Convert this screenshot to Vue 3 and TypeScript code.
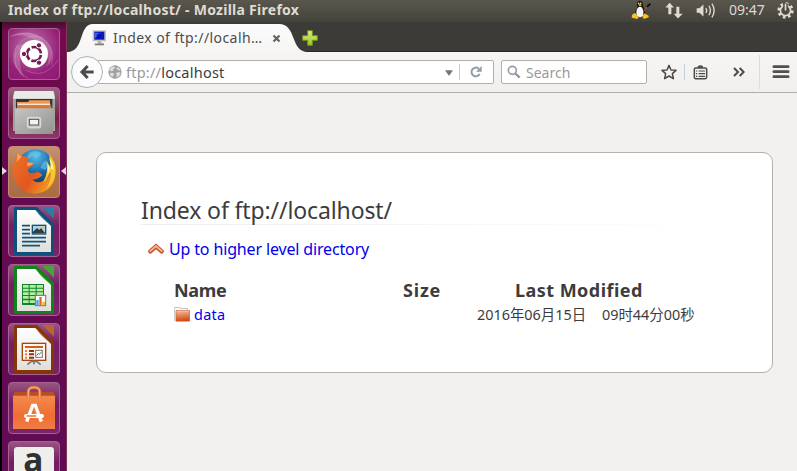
<script setup lang="ts">
interface Entry {
  name: string
  size: string
  date: string
  time: string
}

const host = 'localhost'
const entries: Entry[] = [
  { name: 'data', size: '', date: '2016年06月15日', time: '09时44分00秒' },
]
const apps = ['dash', 'files', 'firefox', 'writer', 'calc', 'impress', 'software', 'amazon']
const gridRows = [63, 74, 85, 96, 109]
</script>

<template>
  <div class="desktop">
    <header class="titlebar">
      <h1 class="window-title">Index of ftp://{{ host }}/ - Mozilla Firefox</h1>
      <div class="indicators">
        <svg class="tux" viewBox="0 0 60 60">
          <path d="M19 24Q15 2 26 2Q37 2 36 18Q46 34 42 50L14 51Q7 38 19 24Z" fill="#161616" />
          <path d="M20 24Q27 17 34 24Q40 36 36 48Q27 55 18 48Q13 34 20 24Z" fill="#f4f4f2" />
          <circle cx="23" cy="10" r="2.5" fill="#ddd" /><circle cx="29" cy="10" r="2.5" fill="#ddd" />
          <path d="M21 14L27 12L33 15L27 19Z" fill="#f2b90c" />
          <path d="M3 45L12 38L23 52L19 57L2 53Z M34 50L40 40L53 47L53 52L39 57Z" fill="#f8c419" />
          <path d="M38 33L50 18" stroke="#9b4c25" stroke-width="4" />
          <path d="M48 20L58 11" stroke="#111" stroke-width="6" />
        </svg>
        <svg class="network" viewBox="0 0 54 50">
          <path d="M14 2L27 16H19V36H10V16H1ZM39 49L26 35H34V14H43V35H53Z" fill="#dfdbd2" />
        </svg>
        <svg class="volume" viewBox="0 0 62 50">
          <path d="M2 18H10L22 7V43L10 32H2Z" fill="#dfdbd2" />
          <path d="M29 18Q34 25 29 32M38 11Q47 25 38 39M47 5Q60 25 47 45" fill="none" stroke="#dfdbd2" stroke-width="4" />
        </svg>
        <span class="clock">09:47</span>
        <svg class="session" viewBox="0 0 50 50">
          <circle cx="25" cy="25" r="20" fill="none" stroke="#dfdbd2" stroke-width="8" stroke-dasharray="7.85 7.85" />
          <circle cx="25" cy="25" r="15" fill="none" stroke="#dfdbd2" stroke-width="5" />
          <path d="M25 4V24" stroke="#45443e" stroke-width="13" />
          <path d="M25 5V25" stroke="#dfdbd2" stroke-width="5" />
        </svg>
      </div>
    </header>

    <div class="workspace">
      <nav class="launcher">
        <div v-for="app in apps" :key="app" class="tile" :class="app">
          <svg v-if="app === 'dash'" viewBox="0 0 156 156">
            <g fill="none" stroke="#e4b6d8" stroke-opacity=".45" stroke-width="2">
              <path d="M8 25Q60 0 112 38Q143 65 130 112" /><path d="M25 120Q3 80 35 43Q68 15 107 31" />
              <path d="M60 151Q10 123 24 74M55 127Q110 156 151 94" />
            </g>
            <path d="M5 25Q70 -5 117 42Q150 80 115 119Q138 65 84 38Q45 15 5 25M25 54Q2 110 50 151Q21 94 50 45Z" fill="#fff" opacity=".2" />
            <circle cx="78" cy="78" r="42" fill="#fff" />
            <circle cx="78" cy="78" r="21" fill="none" stroke="#781c54" stroke-width="8" stroke-dasharray="38 6" stroke-dashoffset="-3" />
            <g fill="#781c54" stroke="#fff" stroke-width="3"><circle cx="48" cy="78" r="8" /><circle cx="93" cy="52" r="8" /><circle cx="93" cy="104" r="8" /></g>
          </svg>
          <svg v-else-if="app === 'files'" viewBox="0 0 156 156">
            <defs>
              <linearGradient id="cab" x1="0" y1="0" x2="1" y2="1"><stop stop-color="#c5c5c3" /><stop offset="1" stop-color="#929290" /></linearGradient>
            </defs>
            <path d="M20 12H136L141 24V132H15V24Z" fill="#a2a2a0" />
            <path d="M20 12H136L141 35H15Z" fill="#e9e9e6" />
            <path d="M24 36H133V67H24Z" fill="#333" />
            <path d="M27 45H60L64 40H126V66H27Z" fill="#f09a50" />
            <path d="M30 50H127V53H30Z" fill="#fff" /><path d="M27 55H130V66H27Z" fill="#dc7633" />
            <path d="M21 64H135V141H21Z" fill="url(#cab)" />
            <rect x="58" y="91" width="40" height="32" rx="5" fill="#ccc" stroke="#eee" stroke-width="2" />
            <rect x="64" y="97" width="28" height="17" fill="#f3f3ed" stroke="#555" stroke-width="3" />
          </svg>
          <svg v-else-if="app === 'firefox'" viewBox="0 0 156 156">
            <defs>
              <radialGradient id="globe" cx=".5" cy=".2" r=".8"><stop stop-color="#55bce8" /><stop offset=".55" stop-color="#1769aa" /><stop offset="1" stop-color="#10265e" /></radialGradient>
              <linearGradient id="fox" x1="0" y1="0" x2="1" y2=".6"><stop stop-color="#ed7427" /><stop offset=".6" stop-color="#e25620" /><stop offset="1" stop-color="#f39a24" /></linearGradient>
            </defs>
            <circle cx="83" cy="66" r="56" fill="url(#globe)" />
            <path d="M63 22Q83 9 101 23L87 36L72 31L57 43ZM105 50Q119 35 121 58L112 73L97 65Z" fill="#79cbe9" opacity=".55" />
            <path d="M13 73Q13 54 25 40Q23 27 28 20Q34 28 42 31Q56 28 64 40Q57 44 58 50L77 51Q75 62 61 68Q57 76 67 81Q78 82 89 77Q99 81 103 88Q90 100 73 101Q88 115 110 103Q128 91 133 56Q147 78 139 103Q125 142 78 143Q21 138 13 73Z" fill="url(#fox)" />
            <path d="M28 20Q34 28 42 31L26 49ZM58 49L77 51Q72 60 57 61Z" fill="#f6a25d" />
            <path d="M121 22Q144 46 143 75Q143 108 115 128Q132 101 127 77Q119 100 105 109Q122 79 116 48Q124 56 127 65Q130 40 121 22Z" fill="#fbc527" />
            <path d="M123 34Q137 52 137 72L128 68L128 54ZM119 53L126 67L119 90Z" fill="#fff39d" />
          </svg>
          <svg v-else-if="app === 'writer' || app === 'calc' || app === 'impress'" viewBox="0 0 156 156">
            <defs>
              <linearGradient :id="`sheet-${app}`" x1="0" y1="0" x2="0" y2="1"><stop stop-color="#fff" /><stop offset="1" stop-color="#dededb" /></linearGradient>
            </defs>
            <path class="accent" d="M18 10Q18 6 22 6H87L138 57V145Q138 150 133 150H22Q18 150 18 145Z" />
            <path class="accent-light" d="M103 6H134Q138 6 138 10V41Z" />
            <path d="M27 15H82L129 63V141H27Z" :fill="`url(#sheet-${app})`" />
            <path class="accent-light" d="M85 17Q100 42 128 59L130 62L83 15Z" />
            <g v-if="app === 'writer'">
              <path d="M42 62H66M42 74H66M42 86H66M42 98H114M42 110H114M42 122H96" stroke="#115478" stroke-width="5" />
              <rect x="73" y="61" width="40" height="26" fill="#a7d6ed" stroke="#115478" stroke-width="4" />
              <path d="M75 85V80L87 69L94 75L99 69L111 84V85Z" fill="#3a3b38" /><circle cx="105" cy="67" r="4" fill="#f7c536" />
            </g>
            <g v-else-if="app === 'calc'">
              <rect x="42" y="60" width="66" height="63" fill="#12832c" />
              <path v-for="y in gridRows" :key="y" :d="`M45 ${y}H62V${y + 8}H45ZM65 ${y}H83V${y + 8}H65ZM86 ${y}H105V${y + 8}H86Z`" fill="#b3efa0" />
              <rect x="82" y="94" width="31" height="31" fill="#fff" stroke="#737373" stroke-width="3" />
              <path d="M85 108H92V123H85Z" fill="#42a4e8" /><path d="M94 99H101V123H94Z" fill="#e8612d" /><path d="M103 113H111V123H103Z" fill="#f0c022" />
            </g>
            <g v-else>
              <rect x="43" y="61" width="70" height="51" fill="#fff7ef" stroke="#a7440c" stroke-width="4" />
              <path d="M51 72H105" stroke="#d75c16" stroke-width="6" />
              <path d="M51 84H57M51 94H57M51 104H57" stroke="#e27c46" stroke-width="6" />
              <path d="M63 84H78M63 94H78M63 104H78" stroke="#8d3205" stroke-width="6" />
              <rect x="83" y="82" width="20" height="21" fill="#fff" stroke="#777" stroke-width="3" />
              <path d="M86 98L91 91L95 94L101 86" fill="none" stroke="#25a34a" stroke-width="3" />
              <path d="M70 115H86L98 125M70 115L58 125M78 113V124" fill="none" stroke="#777" stroke-width="5" />
            </g>
          </svg>
          <svg v-else-if="app === 'software'" viewBox="0 0 156 156">
            <defs><linearGradient id="bag" x1="0" y1="0" x2="0" y2="1"><stop stop-color="#f38a4d" /><stop offset=".6" stop-color="#ee6e32" /><stop offset="1" stop-color="#f17d45" /></linearGradient></defs>
            <path d="M20 30H136L141 43H15Z" fill="#b94f20" />
            <path d="M15 41H141V141H15Z" fill="url(#bag)" />
            <path d="M61 51V27Q63 16 78 16Q93 16 95 27V51" fill="none" stroke="#d66a38" stroke-width="9" />
            <path d="M61 51V27Q63 16 78 16Q93 16 95 27V51" fill="none" stroke="#f6a273" stroke-width="5" />
            <path d="M56 119L74 70H82L100 119" fill="none" stroke="#fff" stroke-width="10" />
            <path d="M54 102H102" stroke="#fff" stroke-width="12" stroke-linecap="round" /><path d="M56 102H85" stroke="#ed7135" stroke-width="5" />
          </svg>
          <svg v-else viewBox="0 0 156 156">
            <rect x="18" y="18" width="120" height="120" rx="10" fill="#eeeeec" />
            <text class="amazon-letter" x="46" y="92">a</text>
            <path d="M36 108Q78 135 121 108" stroke="#f39a20" stroke-width="8" fill="none" />
          </svg>
        </div>
        <svg class="running" viewBox="0 0 5 8"><path d="M0 0L5 4L0 8Z" fill="#ddd8df" /></svg>
        <svg class="focused" viewBox="0 0 5 8"><path d="M5 0L0 4L5 8Z" fill="#ddd8df" /></svg>
      </nav>

      <main class="browser">
        <div class="tabs">
          <svg class="tab-shape" viewBox="0 0 241 30" preserveAspectRatio="none">
            <defs><linearGradient id="tabfill" x1="0" y1="0" x2="0" y2="1"><stop stop-color="#fcfcfc" /><stop offset="1" stop-color="#f6f5f4" /></linearGradient></defs>
            <path d="M0 30C18 30 11 2 26 2H212C230 2 223 30 241 30Z" fill="url(#tabfill)" />
          </svg>
          <div class="tab">
            <svg class="computer" viewBox="0 0 45 48">
              <path d="M2 1H42V34H2Z" fill="#c4c2b7" /><path d="M7 5H37V29H7Z" fill="#0717c4" />
              <path d="M9 8H19V13H14V23H9ZM23 9H31V14H23Z" fill="#3869ed" /><path d="M12 23L28 8H34L17 27Z" fill="#001092" />
              <path d="M17 34H28V39H36V46H8V40H17Z" fill="#aaa89d" /><path d="M9 44H35" stroke="#77756b" stroke-width="3" />
            </svg>
            <span class="tab-label">Index of ftp://localh…</span>
            <svg class="close" viewBox="0 0 24 24"><path d="M4 4L20 20M20 4L4 20" stroke="#66655f" stroke-width="6" /></svg>
          </div>
          <svg class="new-tab" viewBox="0 0 48 48">
            <defs><linearGradient id="plus" x1="0" y1="0" x2="0" y2="1"><stop stop-color="#dceb8b" /><stop offset="1" stop-color="#9dc520" /></linearGradient></defs>
            <path d="M17 2H31V17H46V31H31V46H17V31H2V17H17Z" fill="url(#plus)" stroke="#6c9817" stroke-width="3" />
          </svg>
        </div>

        <div class="toolbar">
          <button class="back" aria-label="Back">
            <svg viewBox="0 0 48 48"><path d="M44 24H10M26 6L9 24L26 42" fill="none" stroke="#4b4b4b" stroke-width="9" /></svg>
          </button>
          <div class="address">
            <svg class="globe" viewBox="0 0 42 42">
              <circle cx="21" cy="21" r="20" fill="#a1a1a1" />
              <path d="M3 15L10 6L18 4L22 9L17 12L14 18L9 19ZM27 5L36 12L37 17L31 16L25 11ZM5 25L13 23L19 27L15 33L13 37L7 31ZM24 24L33 21L38 25L33 34L25 37L26 30Z" fill="#dedede" />
            </svg>
            <span class="url"><span class="scheme">ftp://</span>{{ host }}</span>
            <svg class="dropdown" viewBox="0 0 24 18"><path d="M2 2H22L12 16Z" fill="#777" stroke="#666" stroke-width="2" /></svg>
            <span class="divider"></span>
            <svg class="reload" viewBox="0 0 36 36">
              <path d="M29 24A13 13 0 1 1 26 8" fill="none" stroke="#929ba6" stroke-width="6" /><path d="M35 0V17H18Z" fill="#929ba6" />
            </svg>
          </div>
          <div class="search">
            <svg viewBox="0 0 42 42"><circle cx="16" cy="16" r="12" fill="none" stroke="#9b9b9b" stroke-width="5" /><path d="M25 25L38 38" stroke="#9b9b9b" stroke-width="7" /></svg>
            <span>Search</span>
          </div>
          <svg class="star" viewBox="0 0 48 48"><path d="M24 4L30 18L45 19L34 29L37 44L24 36L11 44L14 29L3 19L18 18Z" fill="none" stroke="#4b4b4b" stroke-width="4.5" stroke-linejoin="round" /></svg>
          <svg class="bookmarks" viewBox="0 0 45 45">
            <rect x="4" y="9" width="37" height="32" rx="4" fill="none" stroke="#4b4b4b" stroke-width="4.5" />
            <path d="M14 8V4Q22 -2 30 4V8Z" fill="#4b4b4b" />
            <path d="M9 18H13M17 18H36M9 26H13M17 26H36M9 34H13M17 34H36" stroke="#4b4b4b" stroke-width="3.5" />
          </svg>
          <svg class="more" viewBox="0 0 36 30"><path d="M3 3L15 15L3 27M20 3L32 15L20 27" fill="none" stroke="#4b4b4b" stroke-width="6" /></svg>
          <div class="menu"><svg viewBox="0 0 51 42"><path d="M4 5H47M4 20H47M4 35H47" stroke="#505050" stroke-width="8" stroke-linecap="round" /></svg></div>
        </div>

        <div class="page">
          <section class="listing">
            <h2 class="heading"><span>Index of ftp://{{ host }}/</span></h2>
            <a class="up">
              <svg viewBox="0 0 48 36"><path d="M7 25L24 10L41 25" fill="none" stroke="#cf492d" stroke-width="13" stroke-linecap="round" /><path d="M7 24L24 9L41 24" fill="none" stroke="#efb58b" stroke-width="6" stroke-linecap="round" /></svg>
              <span>Up to higher level directory</span>
            </a>
            <div class="table">
              <div class="columns"><span class="name">Name</span><span class="size">Size</span><span class="modified">Last Modified</span></div>
              <div v-for="entry in entries" :key="entry.name" class="entry">
                <a class="file">
                  <svg viewBox="0 0 48 44">
                    <defs><linearGradient id="folder" x1="0" y1="0" x2=".15" y2="1"><stop stop-color="#f1c39a" /><stop offset="1" stop-color="#d54816" /></linearGradient></defs>
                    <path d="M1 42V1H19L21 4H41V12" fill="#fafafa" stroke="#aaa" stroke-width="2" />
                    <path d="M6 10H47V42H6Z" fill="url(#folder)" stroke="#c9582e" stroke-width="2" /><path d="M8 12H45" stroke="#f8cba7" stroke-width="2" />
                  </svg><span>{{ entry.name }}</span>
                </a>
                <span class="date">{{ entry.date }}</span><span class="time">{{ entry.time }}</span>
              </div>
            </div>
          </section>
        </div>
      </main>
    </div>
  </div>
</template>

<style>
body { margin: 0; }
</style>

<style scoped>
* { box-sizing: border-box; }
svg { display: block; flex: none; }
.desktop { width: 797px; height: 471px; overflow: hidden; font-family: "Noto Sans", "Noto Sans CJK SC", sans-serif; color: #3c3c3c; white-space: nowrap; }
.titlebar { height: 22px; display: flex; justify-content: space-between; background: linear-gradient(#5a574d, #43423c); color: #dfdbd2; }
.window-title { margin: 0; padding-left: 8px; font-size: 14px; line-height: 20px; font-weight: 700; letter-spacing: .27px; }
.indicators { display: flex; align-items: flex-start; width: 166px; }
.tux { width: 20px; height: 20px; }
.network { width: 18px; height: 17px; margin: 2px 0 0 14px; }
.volume { width: 21px; height: 17px; margin: 2px 0 0 13px; }
.clock { margin-left: 12px; width: 37px; font-size: 14px; line-height: 20px; }
.session { width: 17px; height: 17px; margin: 2px 0 0 11px; }
.workspace { display: flex; height: 449px; }
.launcher { position: relative; width: 67px; height: 449px; padding: 6px 7px 0 6px; border-left: 2px solid #000; border-right: 1px solid #833457; background: linear-gradient(#480b2d, #720b4d 9px, #650a50 35%, #600c55); display: flex; flex-direction: column; gap: 7px; overflow: hidden; }
.tile { width: 52px; height: 52px; flex: none; border-radius: 4px; border: 1px solid #a66294; background: linear-gradient(#965581, #751c62 40%, #792668); overflow: hidden; }
.tile svg { width: 52px; height: 52px; margin: -1px; }
.dash { background: radial-gradient(circle at 45% 35%, #bc7bad, #962178 65%, #8c1974); }
.files { background: linear-gradient(#9c6282, #762044 60%, #8c3767); }
.firefox { background: linear-gradient(#c59372, #b27750 45%, #aa6c43); border-color: #c38c70; }
.writer .accent { fill: #0d517a; }
.writer .accent-light { fill: #2b7da9; }
.calc .accent { fill: #12821a; }
.calc .accent-light { fill: #43a934; }
.impress .accent { fill: #873407; }
.impress .accent-light { fill: #ba6533; }
.amazon-letter { font: 700 100px "Open Sans", sans-serif; fill: #303030; }
.running, .focused { position: absolute; width: 5px; height: 8px; top: 145px; }
.running { left: 0; }
.focused { right: 0; }
.browser { flex: 1; display: flex; flex-direction: column; }
.tabs { position: relative; height: 30px; background: #3c3b37; border-bottom: 1px solid #282724; display: flex; align-items: center; }
.tab-shape { position: absolute; left: 0; top: 0; width: 241px; height: 30px; }
.tab { position: relative; width: 235px; display: flex; align-items: center; padding: 2px 0 0 25px; }
.computer { width: 15px; height: 16px; }
.tab-label { width: 151px; margin-left: 6px; font-size: 14px; line-height: 20px; letter-spacing: .42px; color: #4c4c4c; }
.close { width: 9px; height: 9px; margin: 1px 0 0 8px; }
.new-tab { position: relative; width: 16px; height: 16px; margin-top: 2px; }
.toolbar { height: 41px; display: flex; align-items: center; background: linear-gradient(#f6f5f4, #f0efed); border-bottom: 1px solid #b0aea9; }
.back { position: relative; z-index: 1; width: 32px; height: 32px; border: 1px solid #a9b1bd; border-radius: 50%; padding: 0; margin-left: 4px; background: #fbfbfb; display: flex; align-items: center; justify-content: center; }
.back svg { width: 16px; height: 16px; }
.address, .search { height: 24px; border: 1px solid #b3b0aa; border-radius: 2px; display: flex; align-items: center; background: #fff; }
.address { width: 397px; margin-left: -6px; padding-left: 10px; }
.globe { width: 14px; height: 14px; }
.url { margin-left: 4px; font-size: 14.5px; line-height: 22px; width: 319px; letter-spacing: .23px; }
.scheme { color: #999; }
.dropdown { width: 8px; height: 6px; margin-top: 2px; }
.divider { width: 1px; height: 16px; margin-left: 6px; background: #ccc; }
.reload { width: 12px; height: 12px; margin-left: 10px; }
.search { width: 146px; margin-left: 7px; padding-left: 5px; color: #999; font-size: 14px; }
.search svg { width: 14px; height: 14px; margin-right: 5px; }
.star { width: 16px; height: 16px; margin-left: 14px; box-sizing: content-box; padding-right: 7px; border-right: 1px solid #c7d0da; }
.bookmarks { width: 15px; height: 15px; margin-left: 8px; }
.more { width: 12px; height: 10px; margin-left: 25px; }
.menu { height: 34px; margin-left: 14px; padding-left: 12px; border-left: 1px solid #dcdcda; display: flex; align-items: center; }
.menu svg { width: 18px; height: 14px; }
.page { flex: 1; padding: 59px 24px 0 29px; background: #f2f1f0; }
.listing { width: 677px; height: 221px; border: 1px solid #b4b0aa; border-radius: 10px; background: #fff; padding: 44px 43px 0 44px; }
.heading { height: 28px; margin: 0; font-size: 23px; line-height: 27px; font-weight: 400; letter-spacing: -.12px; border-bottom: 1px solid; border-image: linear-gradient(90deg, #ededed, #f8f8f8 60%, #fff) 1; }
.up { display: flex; align-items: center; height: 24px; margin: 12px 0 0 7px; color: #00e; font-size: 16px; letter-spacing: -.15px; }
.up svg { width: 16px; height: 12px; margin-right: 5px; }
.table { margin: 17px 0 0 33px; }
.columns { display: grid; grid-template-columns: 229px 112px auto; font-weight: 700; font-size: 18px; line-height: 24px; }
.name { letter-spacing: -.3px; }
.size { letter-spacing: .8px; }
.modified { letter-spacing: .46px; }
.entry { display: grid; grid-template-columns: 303px 125px auto; font-size: 14.4px; line-height: 25px; }
.file { display: flex; align-items: center; color: #00e; letter-spacing: .3px; }
.file svg { width: 16px; height: 15px; margin-right: 4px; }
</style>
